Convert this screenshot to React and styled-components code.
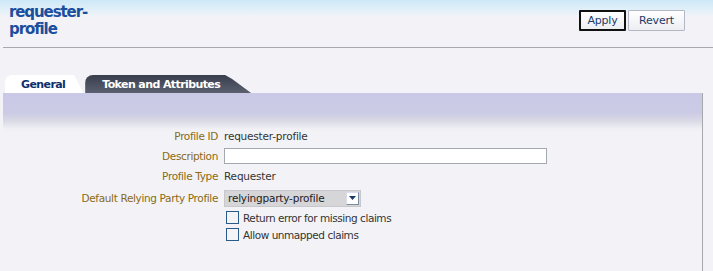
import React from "react";
import styled, { createGlobalStyle } from "styled-components";

const Global = createGlobalStyle`
  html, body { margin: 0; padding: 0; }
  body {
    width: 713px; height: 271px; overflow: hidden;
    background: #f3f3f7;
    font-family: "DejaVu Sans", "Liberation Sans", sans-serif;
  }
`;

const Page = styled.div`
  width: 713px;
  height: 271px;
  display: flex;
  flex-direction: column;
  background: linear-gradient(#cde8f8 0px, #e2f0f9 10px, #f3f3f7 17px);
`;

const Header = styled.div`
  display: flex;
  justify-content: space-between;
  align-items: flex-start;
  height: 47px;
  padding: 0 28px 0 9px;
`;

const Title = styled.h1`
  margin: 4px 0 0;
  font-family: "DejaVu Sans", sans-serif;
  font-size: 15px;
  line-height: 17px;
  font-weight: bold;
  color: #1c4e9e;
  letter-spacing: -1.1px;
`;

const ButtonBar = styled.div`
  display: flex;
  gap: 2px;
  margin-top: 10px;
`;

const Button = styled.button`
  box-sizing: border-box;
  width: ${(p) => p.$w}px;
  height: 21px;
  padding: 0;
  font-family: "DejaVu Sans", sans-serif;
  font-size: 11px;
  letter-spacing: -0.2px;
  color: #1e3a68;
  background: linear-gradient(#ffffff, #eceef2);
  border: ${(p) => (p.$primary ? "2px solid #111" : "1px solid #b4b8c4")};
  border-radius: 1px;
`;

const Divider = styled.div`
  height: 1px;
  margin-left: 3px;
  background: #a8a8b0;
`;

const TabStrip = styled.div`
  display: flex;
  align-items: flex-end;
  height: 45px;
  padding-left: 5px;
`;

const Tab = styled.div`
  height: 18px;
  display: flex;
  align-items: center;
  font-family: "DejaVu Sans", sans-serif;
  font-size: 11px;
  font-weight: bold;
  letter-spacing: -0.6px;
  padding: ${(p) => (p.$active ? "0 18px 0 16px" : "0 31px 0 17px")};
  color: ${(p) => (p.$active ? "#0d2f6c" : "#ffffff")};
  background: ${(p) =>
    p.$active ? "#ffffff" : "linear-gradient(#383e4c, #5a6070)"};
  margin-left: ${(p) => (p.$active ? "0" : "2px")};
  clip-path: ${(p) =>
    p.$active
      ? "polygon(0 0, calc(100% - 9px) 0, 100% 100%, 0 100%)"
      : "polygon(0 0, calc(100% - 26px) 0, calc(100% - 19px) 4px, 100% 100%, 0 100%)"};
  border-radius: ${(p) => (p.$active ? "7px 0 0 0" : "8px 8px 0 0")};
`;

const Panel = styled.div`
  flex: 1;
  margin-left: 3px;
  margin-right: 10px;
  border-right: 1px solid #a8a8ac;
  background: linear-gradient(
    #c9c9e7 0px,
    #cbcbe5 20px,
    #dadae6 28px,
    #f0f0f5 36px,
    #f3f3f7 40px
  );
  padding-top: 33px;
`;

const Form = styled.div`
  display: grid;
  grid-template-columns: 215px 1fr;
  column-gap: 6px;
  font-family: "DejaVu Sans", sans-serif;
  font-size: 10.5px;
`;

const Label = styled.div`
  height: ${(p) => p.$h}px;
  display: flex;
  align-items: center;
  justify-content: flex-end;
  color: #8a6a14;
  white-space: nowrap;
  letter-spacing: -0.35px;
`;

const Value = styled.div`
  height: ${(p) => p.$h}px;
  display: flex;
  align-items: center;
  color: #333;
  letter-spacing: -0.2px;
`;

const TextInput = styled.input`
  box-sizing: border-box;
  width: 323px;
  height: 16px;
  border: 1px solid #a4a8b0;
  background: #fff;
  padding: 0;
`;

const Select = styled.div`
  box-sizing: border-box;
  width: 137px;
  height: 17px;
  display: flex;
  align-items: center;
  justify-content: space-between;
  padding-left: 3px;
  background: #d6d6d8;
  border: 1px solid #c8c8cc;
  color: #222;
`;

const SelectButton = styled.div`
  width: 13px;
  height: 13px;
  margin-right: 1px;
  background: #fff;
  border: 1px solid #7c8aa0;
  border-top-color: #dde;
  border-left-color: #dde;
  display: flex;
  align-items: center;
  justify-content: center;
  box-sizing: border-box;
`;

const Check = styled.label`
  display: flex;
  align-items: center;
  gap: 4px;
  color: #333;
  padding-left: 2px;
  letter-spacing: -0.45px;
`;

const Box = styled.span`
  width: 11px;
  height: 11px;
  border: 1px solid #2a5a8a;
  background: #f4f4f6;
`;

export default function App() {
  return (
    <>
      <Global />
      <Page>
        <Header>
          <Title>
            requester-
            <br />
            profile
          </Title>
          <ButtonBar>
            <Button $primary $w={47}>Apply</Button>
            <Button $w={57}>Revert</Button>
          </ButtonBar>
        </Header>
        <Divider />
        <TabStrip>
          <Tab $active>General</Tab>
          <Tab>Token and Attributes</Tab>
        </TabStrip>
        <Panel>
          <Form>
            <Label $h={20}>Profile ID</Label>
            <Value $h={20}>requester-profile</Value>
            <Label $h={19}>Description</Label>
            <Value $h={19}>
              <TextInput />
            </Value>
            <Label $h={22}>Profile Type</Label>
            <Value $h={22}>Requester</Value>
            <Label $h={22}>Default Relying Party Profile</Label>
            <Value $h={22}>
              <Select>
                relyingparty-profile
                <SelectButton>
                  <svg width="7" height="4" viewBox="0 0 7 4">
                    <path d="M0 0h7L3.5 4z" fill="#1a3a6a" />
                  </svg>
                </SelectButton>
              </Select>
            </Value>
            <div />
            <Value $h={17}>
              <Check>
                <Box />
                Return error for missing claims
              </Check>
            </Value>
            <div />
            <Value $h={17}>
              <Check>
                <Box />
                Allow unmapped claims
              </Check>
            </Value>
          </Form>
        </Panel>
      </Page>
    </>
  );
}
